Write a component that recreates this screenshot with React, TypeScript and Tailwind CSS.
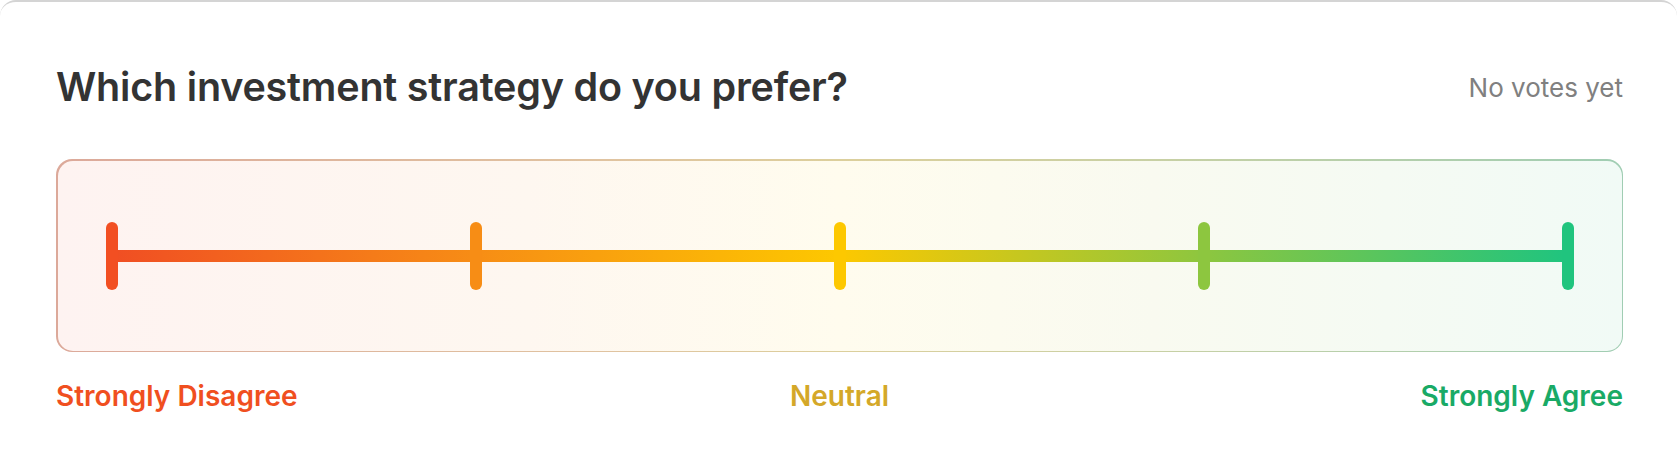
import React from 'react';

type Tick = { id: number; color: string };

const ticks: Tick[] = [
  { id: 1, color: 'bg-[#f24f22]' },
  { id: 2, color: 'bg-[#f78d15]' },
  { id: 3, color: 'bg-[#fdc800]' },
  { id: 4, color: 'bg-[#8dc63f]' },
  { id: 5, color: 'bg-[#20c47e]' },
];

const App: React.FC = () => {
  return (
    <div className="min-h-screen bg-white font-['Inter','Liberation_Sans',sans-serif]">
      <div className="min-h-screen rounded-t-2xl border-t-2 border-[#d4d4d4] bg-white pl-[56px] pr-[54px] pt-[62px] pb-10">
        {/* Header */}
        <div className="flex items-center justify-between">
          <h2 className="text-[39.5px] leading-[1.2] font-semibold text-[#333333] tracking-[-0.2px]">
            Which investment strategy do you prefer?
          </h2>
          <span className="text-[26px] leading-[1.2] text-[#808080]">No votes yet</span>
        </div>

        {/* Scale */}
        <div className="mt-[48px] rounded-2xl bg-[linear-gradient(to_right,#dca99a,#e0c3a0_35%,#dccf9c_50%,#c8d0a4_70%,#a0cdb3)] p-[1.5px]">
          <div className="h-[190px] rounded-[15px] bg-[linear-gradient(to_right,#fef3f1,#fef7f0_30%,#fffcee_50%,#f9faf0_70%,#f1faf6)] px-[48px] flex items-center">
            <div className="relative w-full flex items-center justify-between">
              <div className="absolute left-[6px] right-[6px] top-1/2 -translate-y-1/2 h-[12px] bg-[linear-gradient(to_right,#f04e23,#f78d15_25%,#fdc800_50%,#8dc63f_75%,#1fc47f)]" />
              {ticks.map((t) => (
                <div key={t.id} className={`relative w-[12px] h-[68px] rounded-full ${t.color}`} />
              ))}
            </div>
          </div>
        </div>

        {/* Labels */}
        <div className="mt-[28px] grid grid-cols-3 text-[28px] leading-[1.2] font-semibold">
          <span className="text-left text-[#f04f1f]">Strongly Disagree</span>
          <span className="text-center text-[#d4a829]">Neutral</span>
          <span className="text-right text-[#19aa66]">Strongly Agree</span>
        </div>
      </div>
    </div>
  );
};

export default App;
